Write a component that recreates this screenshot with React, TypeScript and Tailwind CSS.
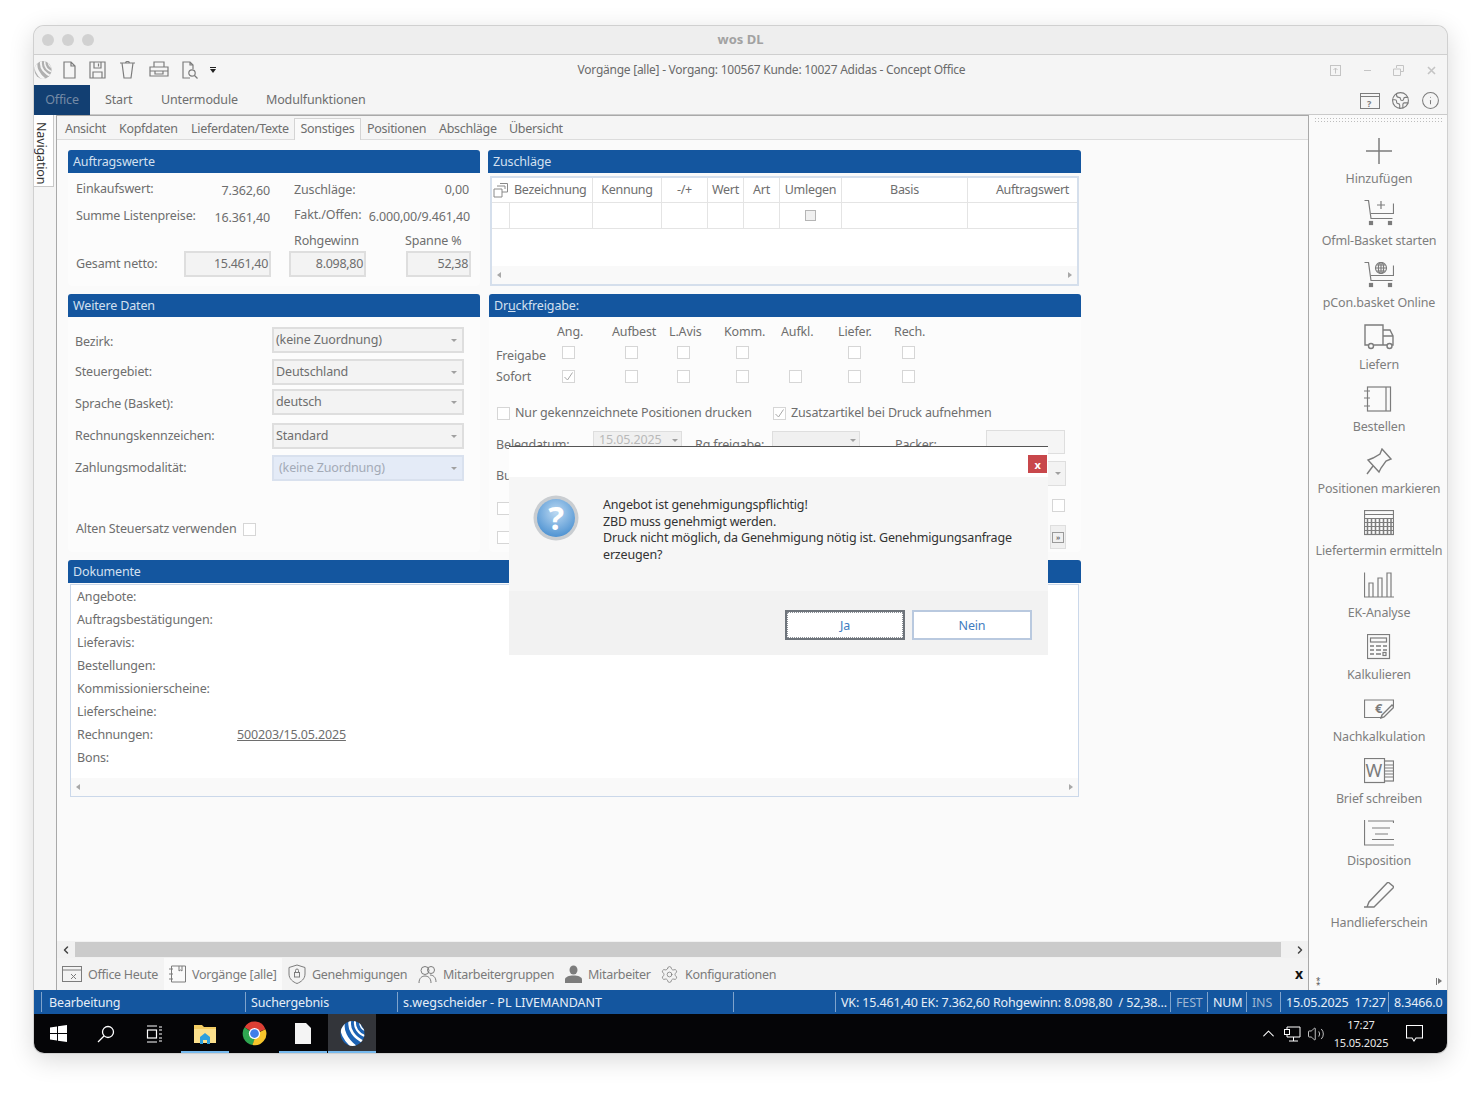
import { ChevronLeft, ChevronRight, ChevronUp, Earth, Info, Settings, Volume2 } from 'lucide-react';
import type { ReactNode } from 'react';

const Stroke = ({ w, h, children, color = '#7c7c7c', sw = 1.2 }: { w: number; h: number; children: ReactNode; color?: string; sw?: number }) => (
  <svg width={w} height={h} viewBox={`0 0 ${w} ${h}`} fill="none" stroke={color} strokeWidth={sw}>
    {children}
  </svg>
);

function Logo({ size, body, swoosh }: { size: number; body: string; swoosh: string }) {
  return (
    <svg width={size} height={size} viewBox="0 0 24 24">
      <clipPath id={`logo${size}`}>
        <ellipse cx="12" cy="12" rx="11.5" ry="12" />
      </clipPath>
      <g clipPath={`url(#logo${size})`}>
        <rect width="24" height="24" fill={body} />
        <g fill="none" stroke={swoosh}>
          <path d="M3 0C0 9 6 19 14 25" strokeWidth="4.5" />
          <path d="M9.5 0C8 8 13 16 24 21" strokeWidth="2.6" />
          <path d="M14.5 0C13.5 6 17 12 25 15" strokeWidth="2" />
          <path d="M19 1C19 5 21 8 25 9.5" strokeWidth="1.4" />
        </g>
      </g>
    </svg>
  );
}

const CartBase = () => (
  <>
    <path d="M.5 .5H4.5L7 18.5H28.5M29.5 3.5V13.5H7" />
    <rect x="5.5" y="21.5" width="3" height="3" fill="#7c7c7c" />
    <rect x="24.5" y="21.5" width="3" height="3" fill="#7c7c7c" />
  </>
);

const sideIcons: Record<string, ReactNode> = {
  plus: (
    <Stroke w={30} h={30} sw={1.5}>
      <path d="M15 2V28M2 15H28" />
    </Stroke>
  ),
  cartPlus: (
    <Stroke w={30} h={26}>
      <CartBase />
      <path d="M17 1V9M13 5H21" />
    </Stroke>
  ),
  cartGlobe: (
    <Stroke w={30} h={26}>
      <CartBase />
      <circle cx="17" cy="6" r="5.5" />
      <path d="M11.5 6H22.5M17 .5V11.5M13 3H21M13 9H21" />
      <ellipse cx="17" cy="6" rx="2.6" ry="5.5" />
    </Stroke>
  ),
  truck: (
    <Stroke w={30} h={26} sw={1.4}>
      <path d="M4 21H1V1H19V21H10M19 6H26L29 12V21H28M19 12H29M19 21H23" />
      <circle cx="7" cy="22" r="2.5" />
      <circle cx="25.5" cy="22" r="2.5" />
    </Stroke>
  ),
  book: (
    <Stroke w={30} h={26}>
      <rect x="3.5" y="1" width="23" height="24" />
      <path d="M22 1V25M0 5H6M0 12H6M0 20H6" />
    </Stroke>
  ),
  pin: (
    <Stroke w={28} h={27} sw={1.4}>
      <path d="M17 1L26 11L21 13L16 20L14 24L3 12L8 10L15 6Z" />
      <path d="M8 18L2 26" />
    </Stroke>
  ),
  calendar: (
    <Stroke w={30} h={26}>
      <rect x=".5" y=".5" width="29" height="24" />
      <path d="M0 4.5H30M0 8.5H30M0 12.5H30M0 16.5H30M0 20.5H30" />
      <path d="M3.5 8V25M7.5 8V25M11.5 8V25M15.5 8V25M19.5 8V25M23.5 8V25M27 8V25" strokeWidth="1.5" />
    </Stroke>
  ),
  bars: (
    <Stroke w={30} h={26}>
      <path d="M.5 .5V25H30" />
      <path d="M5 25V11H9V25M14 25V6H18V25M23 25V1H27V25" />
    </Stroke>
  ),
  calc: (
    <Stroke w={24} h={26}>
      <rect x=".5" y=".5" width="22" height="24" />
      <rect x="3.5" y="4" width="16" height="4" />
      <path d="M3 12H7M9 12H14M16 12H20M3 16H7M9 16H14M16 16H20M3 20H7M9 20H14" strokeWidth="1.6" />
      <rect x="16" y="18.5" width="3" height="3" />
    </Stroke>
  ),
  euro: (
    <Stroke w={30} h={20}>
      <path d="M29.5 7V1H.5V18.5H19" />
      <text x="11" y="14" fontSize="13" fontWeight="700" fill="#7c7c7c" stroke="none" fontFamily="Noto Sans, sans-serif">
        €
      </text>
      <path d="M18 16L28 6L30 8L20 18L17 19Z" strokeWidth="1.4" />
    </Stroke>
  ),
  word: (
    <Stroke w={30} h={26}>
      <rect x="20" y="3" width="9.5" height="20" />
      <path d="M21 7H29M21 10H29M21 13H29M21 16H29M21 19H29" />
      <rect x=".5" y=".5" width="20" height="24" fill="#fafafa" />
      <text x="1.5" y="19" fontSize="18" fontWeight="400" fill="#7c7c7c" stroke="none" fontFamily="Noto Sans, sans-serif">
        W
      </text>
    </Stroke>
  ),
  lines: (
    <Stroke w={30} h={26}>
      <path d="M.5 0V25H30M4 1H29.5V3M8 8H26M11 14H24M8 19.5H30" />
    </Stroke>
  ),
  pen: (
    <Stroke w={30} h={26} sw={1.4}>
      <path d="M0 25H10L30 5L24 0L5 20L3 25" />
    </Stroke>
  ),
};

const sideItems = [
  ['plus', 'Hinzufügen'],
  ['cartPlus', 'Ofml-Basket starten'],
  ['cartGlobe', 'pCon.basket Online'],
  ['truck', 'Liefern'],
  ['book', 'Bestellen'],
  ['pin', 'Positionen markieren'],
  ['calendar', 'Liefertermin ermitteln'],
  ['bars', 'EK-Analyse'],
  ['calc', 'Kalkulieren'],
  ['euro', 'Nachkalkulation'],
  ['word', 'Brief schreiben'],
  ['lines', 'Disposition'],
  ['pen', 'Handlieferschein'],
];

function Header({ children }: { children: ReactNode }) {
  return <div className="flex h-[23px] items-center rounded-t-[3px] bg-[#14569f] pl-[5px] pt-[2px] text-[#d3e0f0]">{children}</div>;
}

function Check({ checked, className = '' }: { checked?: boolean; className?: string }) {
  return (
    <span className={`flex h-[13px] w-[13px] shrink-0 items-center justify-center border border-[#d6d6d6] bg-white ${className}`}>
      {checked && (
        <svg width="11" height="11" viewBox="0 0 11 11" fill="none" stroke="#a8a8a8" strokeWidth="1">
          <path d="M1.5 6L4.5 9L9.5 1.5" />
        </svg>
      )}
    </span>
  );
}

function ReadBox({ value, className }: { value: string; className: string }) {
  return <div className={`flex h-[26px] items-center justify-end border-2 border-[#dedede] bg-[#f3f3f3] pr-[1px] tracking-[-0.3px] ${className}`}>{value}</div>;
}

const Arrow = ({ color = '#a0a0a0' }: { color?: string }) => <span className="h-0 w-0 border-x-[3px] border-t-[3px] border-x-transparent" style={{ borderTopColor: color }} />;

function Combo({ label, value, tone, className, labelCls = 'pt-[0px]' }: { label: string; value: string; tone?: boolean; className: string; labelCls?: string }) {
  return (
    <div className={`flex h-[26px] items-center ${className}`}>
      <span className={`w-[197px] ${labelCls}`}>{label}</span>
      <div className={`flex h-[26px] w-[192px] items-center justify-between border-2 pr-[5px] ${tone ? 'border-[#d9e1ee] bg-[#e4ebf7] pl-[5px] text-[#a3aab6]' : 'border-[#dedede] bg-[#f3f3f3] pl-[2px]'}`}>
        <span>{value}</span>
        <Arrow />
      </div>
    </div>
  );
}

function ScrollRow({ className = '' }: { className?: string }) {
  return (
    <div className={`flex h-[18px] items-center justify-between bg-[#f9f9f9] px-[5px] ${className}`}>
      <span className="h-0 w-0 border-y-[3px] border-r-[4px] border-y-transparent border-r-[#a8a8a8]" />
      <span className="h-0 w-0 border-y-[3px] border-l-[4px] border-y-transparent border-l-[#a8a8a8]" />
    </div>
  );
}

const gridCols = [
  { label: 'Kennung', cls: 'w-[69px] text-center' },
  { label: '-/+', cls: 'w-[46px] text-center' },
  { label: 'Wert', cls: 'w-[36px] text-center' },
  { label: 'Art', cls: 'w-[36px] text-center' },
  { label: 'Umlegen', cls: 'w-[62px] text-center' },
  { label: 'Basis', cls: 'w-[126px] text-center' },
];

const freigabeCols = [
  { label: 'Ang.', w: 'w-[55px]', ml: 'ml-[5px]' },
  { label: 'Aufbest', w: 'w-[57px]', ml: 'ml-[13px]' },
  { label: 'L.Avis', w: 'w-[55px]', ml: 'ml-[8px]' },
  { label: 'Komm.', w: 'w-[57px]', ml: 'ml-[12px]' },
  { label: 'Aufkl.', w: 'w-[57px]', ml: 'ml-[8px]' },
  { label: 'Liefer.', w: 'w-[56px]', ml: 'ml-[10px]' },
  { label: 'Rech.', w: 'w-[50px]', ml: 'ml-[8px]' },
];

const docs = ['Angebote:', 'Auftragsbestätigungen:', 'Lieferavis:', 'Bestellungen:', 'Kommissionierscheine:', 'Lieferscheine:', 'Rechnungen:', 'Bons:'];

const statusCells = [
  { w: 'w-[204px]', text: 'Bearbeitung', cls: 'pl-[7px]' },
  { w: 'w-[152px]', text: 'Suchergebnis', cls: 'pl-[5px]' },
  { w: 'w-[336px]', text: 's.wegscheider - PL LIVEMANDANT', cls: 'pl-[5px] tracking-normal' },
  { w: 'w-[102px]', text: '', cls: '' },
  { w: 'w-[335px]', text: 'VK: 15.461,40 EK: 7.362,60 Rohgewinn: 8.098,80  / 52,38...', cls: 'pl-[5px]' },
  { w: 'w-[37px]', text: 'FEST', cls: 'pl-[5px] text-[#9fb6d3]' },
  { w: 'w-[39px]', text: 'NUM', cls: 'pl-[5px]' },
  { w: 'w-[34px]', text: 'INS', cls: 'pl-[5px] text-[#9fb6d3]' },
  { w: 'w-[108px]', text: '15.05.2025  17:27', cls: 'pl-[5px]' },
  { w: 'w-[56px]', text: '8.3466.0', cls: 'pl-[5px]' },
];

const docTabs: { icon: ReactNode; label: string; box: string }[] = [
  {
    label: 'Office Heute',
    box: 'w-[107px] pl-[5px]',
    icon: (
      <Stroke w={20} h={18} sw={1}>
        <rect x=".5" y="1.5" width="19" height="15" />
        <path d="M0 5H20M9 9L14 14M14 9L9 14" />
      </Stroke>
    ),
  },
  {
    label: 'Vorgänge [alle]',
    box: 'w-[118px] bg-[#fafafa] pl-[5px]',
    icon: (
      <Stroke w={17} h={18} sw={1}>
        <path d="M2.5 1H16.5V17H2.5ZM0 4H4M0 9H4M0 14H4M10 1V6L11.5 5L13 6V1" />
      </Stroke>
    ),
  },
  {
    label: 'Genehmigungen',
    box: 'w-[130px] pl-[6px]',
    icon: (
      <Stroke w={18} h={20} sw={1}>
        <path d="M9 1L17 3.5V10C17 15 13 18 9 19.5C5 18 1 15 1 10V3.5Z" />
        <rect x="6.5" y="8.5" width="5" height="4.5" />
        <path d="M7.5 8.5V6.5A1.5 1.5 0 0 1 10.5 6.5V8.5" />
      </Stroke>
    ),
  },
  {
    label: 'Mitarbeitergruppen',
    box: 'w-[147px] pl-[6px]',
    icon: (
      <Stroke w={19} h={19} sw={1}>
        <circle cx="7" cy="5.5" r="4" />
        <circle cx="13" cy="5" r="3.5" />
        <path d="M1 18C1 13 4 11 7 11C10 11 13 13 13 18M12 10C15 10 18 12 18 17" />
      </Stroke>
    ),
  },
  {
    label: 'Mitarbeiter',
    box: 'w-[96px] pl-[6px]',
    icon: (
      <svg width="17" height="18" viewBox="0 0 17 18" fill="#7c7c7c">
        <ellipse cx="8.5" cy="5" rx="4" ry="4.6" />
        <path d="M0 18V14.5C0 12 4 10.5 8.5 10.5C13 10.5 17 12 17 14.5V18Z" />
      </svg>
    ),
  },
  {
    label: 'Konfigurationen',
    box: 'pl-[5px]',
    icon: <Settings size={19} strokeWidth={1} color="#7c7c7c" />,
  },
];

export default function App() {
  return (
    <div className="h-[1096px] w-[1481px] bg-white pl-[34px] pt-[26px] text-[12.5px] text-[#6e6e6e] [font-family:'Noto_Sans',sans-serif] tracking-[-0.15px]">
      <div className="relative flex h-[1027px] w-[1413px] flex-col overflow-hidden rounded-[10px] bg-[#f5f5f5] shadow-[0_0_0_1px_#d0d0d0,0_6px_26px_rgba(0,0,0,0.16)]">
        {/* title bar */}
        <div className="relative flex h-[29px] shrink-0 items-center gap-[8px] border-b border-[#cfcfcf] bg-[#eeeeee] pl-[8px]">
          <span className="h-[12px] w-[12px] rounded-full bg-[#d1d1d1]" />
          <span className="h-[12px] w-[12px] rounded-full bg-[#d1d1d1]" />
          <span className="h-[12px] w-[12px] rounded-full bg-[#d1d1d1]" />
          <span className="flex-1 pr-[68px] text-center text-[13px] font-bold tracking-normal text-[#a2a2a2]">wos DL</span>
        </div>

        {/* quick access */}
        <div className="flex h-[30px] shrink-0 items-center">
          <div className="flex w-[184px] items-center pl-0">
            <Logo size={18} body="#b0b0b0" swoosh="#f5f5f5" />
            <div className="ml-[11px] flex items-center gap-[13px]">
              <Stroke w={13} h={18}>
                <path d="M1 1H8L12 5V17H1ZM8 1V5H12" />
              </Stroke>
              <Stroke w={17} h={18}>
                <path d="M1 1H16V17H1ZM5 1V7H12V1M4 17V11H13V17M9.5 2.5V5.5" />
              </Stroke>
              <Stroke w={17} h={18}>
                <path d="M1 2H16M3 2L5 17H12L14 2M6.5 2C6.5 0 10.5 0 10.5 2" />
              </Stroke>
              <Stroke w={20} h={18}>
                <path d="M5 6V1H15V6M1 6H19V15H1ZM1 10H19M6 10V13H14V10" />
              </Stroke>
              <Stroke w={16} h={18}>
                <path d="M8 17H1V1H8L11 4V8M8 1V4H11" />
                <circle cx="10" cy="12" r="3.2" />
                <path d="M12.5 14.5L15.5 17.5" />
              </Stroke>
              <span className="-ml-[1px] flex flex-col items-center gap-[1px]">
                <span className="h-[1px] w-[6px] bg-[#222]" />
                <span className="h-0 w-0 border-x-[3px] border-t-[4px] border-x-transparent border-t-[#222]" />
              </span>
            </div>
          </div>
          <div className="flex-1 text-center text-[12px] tracking-[-0.25px] text-[#6a6a6a]">Vorgänge [alle] - Vorgang: 100567 Kunde: 10027 Adidas - Concept Office</div>
          <div className="flex w-[122px] items-center justify-between pl-[5px] pr-[11px]">
            <Stroke w={11} h={11} color="#c4c4c4" sw={1}>
              <rect x=".5" y=".5" width="10" height="10" />
              <path d="M5.5 8.5V3M3.5 5L5.5 3L7.5 5" />
            </Stroke>
            <span className="h-[1px] w-[7px] bg-[#c4c4c4]" />
            <Stroke w={11} h={11} color="#c4c4c4" sw={1}>
              <path d="M3.5 3V.5H10.5V6.5H7.5M.5 4H7.5V10.5H.5Z" />
            </Stroke>
            <Stroke w={9} h={9} color="#c4c4c4" sw={1.6}>
              <path d="M1 1L8 8M8 1L1 8" />
            </Stroke>
          </div>
        </div>

        {/* ribbon */}
        <div className="flex h-[30px] shrink-0 items-center border-b border-[#cacaca]">
          <div className="flex h-[30px] w-[56px] items-center justify-center bg-[#123f72] pt-[2px] text-[#748aa5]">Office</div>
          <span className="ml-[15px] w-[56px] pt-[1px]">Start</span>
          <span className="w-[105px] pt-[1px]">Untermodule</span>
          <span className="pt-[1px]">Modulfunktionen</span>
          <div className="ml-auto flex items-center gap-[11px] pr-[7px] pt-[2px]">
            <Stroke w={20} h={16} sw={1}>
              <rect x=".5" y=".5" width="19" height="15" />
              <path d="M0 3.5H20" />
              <text x="7" y="13.5" fontSize="9" fontWeight="700" fill="#7c7c7c" stroke="none" fontFamily="Noto Sans, sans-serif">
                ?
              </text>
            </Stroke>
            <Earth size={19} strokeWidth={1.4} color="#7c7c7c" />
            <Info size={19} strokeWidth={1.3} color="#7c7c7c" />
          </div>
        </div>

        {/* main */}
        <div className="flex min-h-0 flex-1">
          <div className="w-[22px] shrink-0">
            <div className="flex h-[72px] w-[20px] justify-center border-b border-r border-[#c9c9c9] bg-white pr-[3px] pt-[5px] text-[12.5px] text-[#333] [writing-mode:vertical-rl]">Navigation</div>
          </div>

          <div className="flex w-[1253px] shrink-0 flex-col border-l border-r border-t border-[#a9a9a9] bg-[#fafafa]">
            <div className="flex h-[24px] shrink-0 items-end border-b border-[#dcdcdc] bg-[#f5f5f5] pl-[8px] tracking-[-0.3px]">
              <span className="w-[54px]">Ansicht</span>
              <span className="w-[72px]">Kopfdaten</span>
              <span className="w-[104px]">Lieferdaten/Texte</span>
              <span className="-mb-[1px] -ml-[1px] flex h-[22px] w-[67px] items-center justify-center border-x border-t border-[#d4d4d4] bg-[#fafafa]">Sonstiges</span>
              <span className="ml-[6px] w-[72px]">Positionen</span>
              <span className="w-[70px]">Abschläge</span>
              <span>Übersicht</span>
            </div>

            <div className="min-h-0 flex-1 pl-[11px] pt-[10px]">
              <div className="grid w-[1013px] grid-cols-[412px_593px] grid-rows-[136px_258px_237px] gap-[8px]">
                {/* Auftragswerte */}
                <section className="flex flex-col">
                  <Header>Auftragswerte</Header>
                  <div className="flex flex-1 flex-col rounded-b-[4px] bg-[#fcfcfc] pl-[8px]">
                    <div className="flex h-[30px] items-center pt-[4px]">
                      <div className="flex w-[194px] justify-between">
                        <span>Einkaufswert:</span>
                        <span className="pt-[2px]">7.362,60</span>
                      </div>
                      <div className="ml-[24px] flex w-[175px] justify-between">
                        <span>Zuschläge:</span>
                        <span>0,00</span>
                      </div>
                    </div>
                    <div className="flex h-[25px] items-center pt-[4px]">
                      <div className="flex w-[194px] justify-between">
                        <span>Summe Listenpreise:</span>
                        <span className="pt-[2px]">16.361,40</span>
                      </div>
                      <div className="mb-[2px] ml-[24px] flex w-[176px] justify-between">
                        <span>Fakt./Offen:</span>
                        <span className="pt-[2px]">6.000,00/9.461,40</span>
                      </div>
                    </div>
                    <div className="-mb-[3px] flex h-[26px] items-center pl-[218px]">
                      <span className="w-[111px]">Rohgewinn</span>
                      <span>Spanne %</span>
                    </div>
                    <div className="flex items-center">
                      <span className="w-[108px]">Gesamt netto:</span>
                      <ReadBox value="15.461,40" className="w-[87px]" />
                      <ReadBox value="8.098,80" className="ml-[18px] w-[77px]" />
                      <ReadBox value="52,38" className="ml-[40px] w-[65px]" />
                    </div>
                  </div>
                </section>

                {/* Zuschläge */}
                <section className="flex flex-col">
                  <Header>Zuschläge</Header>
                  <div className="mx-[2px] mt-[3px] flex flex-1 flex-col border-2 border-[#d5dfec] bg-white tracking-[-0.3px]">
                    <div className="flex h-[25px] shrink-0 border-b border-[#e4e4e4]">
                      <div className="flex w-[101px] items-center gap-[6px] border-r border-[#e4e4e4] pl-[1px]">
                        <Stroke w={15} h={15} sw={1} color="#8a8a8a">
                          <path d="M1 6H9V14H1ZM4 3H12V6M7 .5H14.5V9H9" />
                        </Stroke>
                        <span>Bezeichnung</span>
                      </div>
                      {gridCols.map((c) => (
                        <div key={c.label} className={`flex items-center justify-center border-r border-[#e4e4e4] ${c.cls}`}>
                          {c.label}
                        </div>
                      ))}
                      <div className="flex flex-1 items-center justify-end pr-[8px]">Auftragswert</div>
                    </div>
                    <div className="flex h-[26px] shrink-0 border-b border-[#e4e4e4]">
                      <div className="w-[18px] border-r border-[#e4e4e4]" />
                      <div className="w-[83px] border-r border-[#e4e4e4]" />
                      {gridCols.map((c) => (
                        <div key={c.label} className={`flex items-center justify-center border-r border-[#e4e4e4] ${c.cls}`}>
                          {c.label === 'Umlegen' && <span className="h-[11px] w-[11px] border border-[#b5b5b5] bg-[#f0f0f0]" />}
                        </div>
                      ))}
                    </div>
                    <div className="flex-1" />
                    <ScrollRow />
                  </div>
                </section>

                {/* Weitere Daten */}
                <section className="flex flex-col">
                  <Header>Weitere Daten</Header>
                  <div className="flex flex-1 flex-col rounded-b-[4px] bg-[#fcfcfc] pl-[7px]">
                    <Combo label="Bezirk:" value="(keine Zuordnung)" className="mt-[10px]" labelCls="pt-[4px]" />
                    <Combo label="Steuergebiet:" value="Deutschland" className="mt-[6px]" />
                    <Combo label="Sprache (Basket):" value="deutsch" className="mt-[4px]" labelCls="pt-[4px]" />
                    <Combo label="Rechnungskennzeichen:" value="Standard" className="mt-[8px]" />
                    <Combo label="Zahlungsmodalität:" value="(keine Zuordnung)" tone className="mt-[6px]" />
                    <div className="mt-[39px] flex items-center gap-[7px] pl-[1px]">
                      <span>Alten Steuersatz verwenden</span>
                      <Check />
                    </div>
                  </div>
                </section>

                {/* Druckfreigabe */}
                <section className="ml-[1px] flex flex-col">
                  <Header>
                    <span>
                      Dr<span className="underline">u</span>ckfreigabe:
                    </span>
                  </Header>
                  <div className="flex flex-1 flex-col rounded-b-[4px] bg-[#fcfcfc] pl-[7px]">
                    <div className="mt-[6px] flex h-[18px] items-center pl-[61px]">
                      {freigabeCols.map((c) => (
                        <span key={c.label} className={c.w}>
                          {c.label}
                        </span>
                      ))}
                    </div>
                    <div className="mt-[1px] flex h-[20px] items-center">
                      <span className="w-[61px] pt-[8px]">Freigabe</span>
                      {freigabeCols.map((c) => (
                        <span key={c.label} className={c.w}>
                          {c.label !== 'Aufkl.' && <Check className={c.ml} />}
                        </span>
                      ))}
                    </div>
                    <div className="mt-[4px] flex h-[20px] items-center">
                      <span className="w-[61px] pt-[2px]">Sofort</span>
                      {freigabeCols.map((c) => (
                        <span key={c.label} className={c.w}>
                          <Check checked={c.label === 'Ang.'} className={c.ml} />
                        </span>
                      ))}
                    </div>
                    <div className="mt-[18px] flex h-[18px] items-center">
                      <Check className="ml-[1px]" />
                      <span className="ml-[5px] w-[258px]">Nur gekennzeichnete Positionen drucken</span>
                      <Check checked />
                      <span className="ml-[5px]">Zusatzartikel bei Druck aufnehmen</span>
                    </div>
                    <div className="mt-[9px] flex h-[24px] items-start">
                      <span className="w-[97px] pt-[5px]">Belegdatum:</span>
                      <div className="flex h-[18px] w-[89px] items-center justify-between border border-[#dedede] bg-[#f0f0f0] pl-[5px] pr-[3px] text-[#b9b9b9]">
                        15.05.2025
                        <Arrow />
                      </div>
                      <span className="ml-[13px] w-[77px] pt-[5px]">Rg freigabe:</span>
                      <div className="flex h-[18px] w-[88px] items-center justify-end border border-[#dedede] bg-[#f0f0f0] pr-[3px]">
                        <Arrow />
                      </div>
                      <span className="ml-[35px] w-[91px] pt-[5px]">Packer:</span>
                      <div className="-mt-[1px] h-[24px] w-[79px] border border-[#dedede] bg-[#f5f5f5]" />
                    </div>
                    <div className="mt-[6px] flex h-[25px] items-start">
                      <span className="pt-[6px]">Bu</span>
                      <div className="ml-auto mr-[15px] flex h-[25px] w-[40px] items-center justify-end border border-[#dedede] bg-[#f3f3f3] pr-[4px]">
                        <Arrow />
                      </div>
                    </div>
                    <div className="mt-[13px] flex items-start justify-between pr-[16px]">
                      <Check className="ml-[1px] mt-[3px]" />
                      <Check />
                    </div>
                    <div className="mt-[10px] flex items-center justify-between pr-[15px]">
                      <Check className="ml-[1px]" />
                      <span className="flex h-[24px] w-[16px] items-center justify-center border border-[#dedede] bg-[#f0f0f0]">
                        <span className="flex h-[11px] w-[12px] items-center justify-center border border-[#9a9a9a] text-[7px] font-bold leading-none">»</span>
                      </span>
                    </div>
                  </div>
                </section>

                {/* Dokumente */}
                <section className="col-span-2 flex flex-col">
                  <Header>Dokumente</Header>
                  <div className="mx-[2px] mt-[1px] flex flex-1 flex-col border border-[#cbd8ea] bg-white">
                    <div className="flex-1 pl-[6px] pt-[1px]">
                      {docs.map((d) => (
                        <div key={d} className="flex h-[23px] items-center">
                          <span className="w-[160px]">{d}</span>
                          {d === 'Rechnungen:' && <span className="underline">500203/15.05.2025</span>}
                        </div>
                      ))}
                    </div>
                    <ScrollRow />
                  </div>
                </section>
              </div>
            </div>

            <div className="flex h-[17px] shrink-0 items-center bg-[#f1f1f1]">
              <ChevronLeft size={12} strokeWidth={3} color="#444" className="mx-[3px] w-[12px]" />
              <div className="h-[15px] w-[1206px] bg-[#cbcbcb]" />
              <ChevronRight size={12} strokeWidth={3} color="#444" className="ml-[13px]" />
            </div>
            <div className="flex h-[32px] shrink-0 items-center bg-[#f3f3f3]">
              {docTabs.map((t) => (
                <div key={t.label} className={`flex h-[32px] items-center gap-[6px] ${t.box}`}>
                  {t.icon}
                  <span className="pt-[3px] tracking-[-0.3px] text-[#7a7a7a]">{t.label}</span>
                </div>
              ))}
              <span className="ml-auto pr-[5px] text-[14px] font-bold leading-none text-[#111]">x</span>
            </div>
          </div>

          {/* right side bar */}
          <div className="flex min-w-0 flex-1 flex-col bg-[#fafafa] pl-[2px]">
            <div className="mx-[3px] mt-[2px] h-[6px] shrink-0 bg-[radial-gradient(#bdbdbd_0.7px,transparent_0.8px)] bg-[length:3px_3px]" />
            <div className="flex flex-1 flex-col pt-[12px]">
              {sideItems.map(([icon, label]) => (
                <div key={label} className="flex h-[62px] shrink-0 flex-col items-center">
                  <div className="flex h-[32px] items-center justify-center">{sideIcons[icon]}</div>
                  <span className="mt-[3px] whitespace-nowrap text-[#7e7e7e]">{label}</span>
                </div>
              ))}
              <div className="mt-auto flex items-center justify-between px-[5px] pb-[5px] text-[8px] leading-none text-[#555]">
                <span>⁑</span>
                <span className="flex items-center gap-[1px]">
                  <span className="h-[7px] w-[1px] bg-[#777]" />
                  <span className="h-0 w-0 border-y-[3px] border-l-[4px] border-y-transparent border-l-[#777]" />
                </span>
              </div>
            </div>
          </div>
        </div>

        {/* status bar */}
        <div className="flex h-[24px] shrink-0 items-center bg-[#14569f] pl-[7px] text-[#e6eef7]">
          {statusCells.map((c, i) => (
            <div key={i} className={`flex h-[20px] items-center whitespace-pre border-l border-[#7fa3cc] pt-[3px] ${c.w} ${c.cls}`}>
              {c.text}
            </div>
          ))}
        </div>

        {/* taskbar */}
        <div className="flex h-[39px] shrink-0 items-center bg-[#050507]">
          <div className="flex h-[39px] w-[48px] items-center justify-center">
            <svg width="17" height="17" viewBox="0 0 17 17" fill="#fff">
              <path d="M0 2.5L7 1.5V8H0ZM8 1.3L17 0V8H8ZM0 9H7V15.5L0 14.5ZM8 9H17V17L8 15.7Z" />
            </svg>
          </div>
          <div className="flex h-[39px] w-[48px] items-center justify-center">
            <Stroke w={18} h={18} color="#fff" sw={1.3}>
              <circle cx="11" cy="7" r="5.5" />
              <path d="M7 11L1 17" />
            </Stroke>
          </div>
          <div className="flex h-[39px] w-[48px] items-center justify-center">
            <Stroke w={16} h={18} color="#fff" sw={1.2}>
              <path d="M1 1H11M1 17H11" />
              <rect x="1.5" y="5" width="9" height="8" />
              <path d="M13 2H16M13 5H16M13 9H16M13 13H16M13 16H16" />
            </Stroke>
          </div>
          <div className="ml-[3px] flex h-[39px] w-[48px] items-center justify-center border-b-2 border-[#76b9ed] pt-[2px]">
            <svg width="22" height="22" viewBox="0 0 22 22">
              <path d="M0 2H8L10 4H22V20H0Z" fill="#f3cd63" />
              <path d="M0 6H22V20H0Z" fill="#fbe08c" />
              <path d="M6 14L11 10L16 14V21H13V17H9V21H6Z" fill="#2d9fdc" />
            </svg>
          </div>
          <div className="ml-[1px] flex h-[39px] w-[48px] items-center justify-center">
            <svg width="25" height="25" viewBox="0 0 24 24">
              <path d="M12 12L2.5 6A11 11 0 0 1 22.5 8Z" fill="#dc3f34" />
              <path d="M2.5 6A11 11 0 0 0 10 23L14 14Z" fill="#2fa651" />
              <path d="M22.5 8A11 11 0 0 1 10 23L14 12Z" fill="#f7c52b" />
              <circle cx="12" cy="12" r="5.4" fill="#fff" />
              <circle cx="12" cy="12" r="4.2" fill="#3f7ee8" />
            </svg>
          </div>
          <div className="ml-[1px] flex h-[39px] w-[48px] items-center justify-center border-b-2 border-[#76b9ed] pt-[2px]">
            <svg width="16" height="21" viewBox="0 0 16 21" fill="#f4f4f4">
              <path d="M0 0H11L16 5V21H0Z" />
            </svg>
          </div>
          <div className="ml-[1px] flex h-[39px] w-[48px] items-center justify-center border-b-2 border-[#76b9ed] bg-[#33353a] pt-[2px]">
            <Logo size={25} body="#1c62b3" swoosh="#ffffff" />
          </div>
          <div className="ml-auto flex items-center pr-[24px] text-white">
            <ChevronUp size={19} strokeWidth={1.3} />
            <span className="ml-[6px]">
              <Stroke w={17} h={16} color="#fff" sw={1}>
                <path d="M3 1H16V11H3ZM9.5 11V15M5 15H14" />
                <rect x=".5" y="3.5" width="5" height="5" fill="#050507" />
              </Stroke>
            </span>
            <Volume2 size={18} strokeWidth={1} className="ml-[6px]" />
            <div className="ml-[7px] flex w-[58px] flex-col items-center text-[11px] leading-[18px] text-[#e8e8e8]">
              <span>17:27</span>
              <span>15.05.2025</span>
            </div>
            <span className="ml-[16px]">
              <Stroke w={17} h={17} color="#fff" sw={1.1}>
                <path d="M.5 .5H16.5V13H10L8 16L6 13H.5Z" />
              </Stroke>
            </span>
          </div>
        </div>

        {/* message dialog */}
        <div className="absolute left-[475px] top-[420px] flex h-[209px] w-[539px] flex-col border-t border-[#555] text-[#333]">
          <div className="flex h-[30px] shrink-0 justify-end bg-white pr-[1px] pt-[8px]">
            <span className="flex h-[18px] w-[19px] items-center justify-center bg-[#c8474b] text-[11px] font-bold leading-none text-white">x</span>
          </div>
          <div className="flex h-[114px] shrink-0 bg-[#f6f6f6] pl-[24px] pt-[18px]">
            <svg width="46" height="46" viewBox="0 0 46 46" className="shrink-0">
              <defs>
                <radialGradient id="q" cx="50%" cy="35%" r="65%">
                  <stop offset="0" stopColor="#bcd9f2" />
                  <stop offset="1" stopColor="#4f93d2" />
                </radialGradient>
              </defs>
              <circle cx="23" cy="23" r="22.5" fill="#c9cdd1" />
              <circle cx="23" cy="23" r="19" fill="url(#q)" />
              <text x="23" y="35" textAnchor="middle" fontSize="33" fontWeight="700" fill="#fff" fontFamily="Noto Sans, sans-serif">
                ?
              </text>
            </svg>
            <div className="ml-[24px] w-[420px] pt-[2px] text-[12.5px] leading-[16.6px] tracking-[-0.17px]">
              Angebot ist genehmigungspflichtig!
              <br />
              ZBD muss genehmigt werden.
              <br />
              Druck nicht möglich, da Genehmigung nötig ist. Genehmigungsanfrage erzeugen?
            </div>
          </div>
          <div className="flex flex-1 justify-end gap-[7px] bg-[#f2f2f2] pr-[16px] pt-[19px] text-[#3f7cc0]">
            <button className="flex h-[30px] w-[120px] items-center justify-center border-2 border-[#6e747b] bg-white pt-[2px] outline-1 -outline-offset-3 outline-dotted outline-[#8a8f96]">Ja</button>
            <button className="flex h-[30px] w-[120px] items-center justify-center border-2 border-[#b9c9df] bg-white pt-[2px]">Nein</button>
          </div>
        </div>
      </div>
    </div>
  );
}
